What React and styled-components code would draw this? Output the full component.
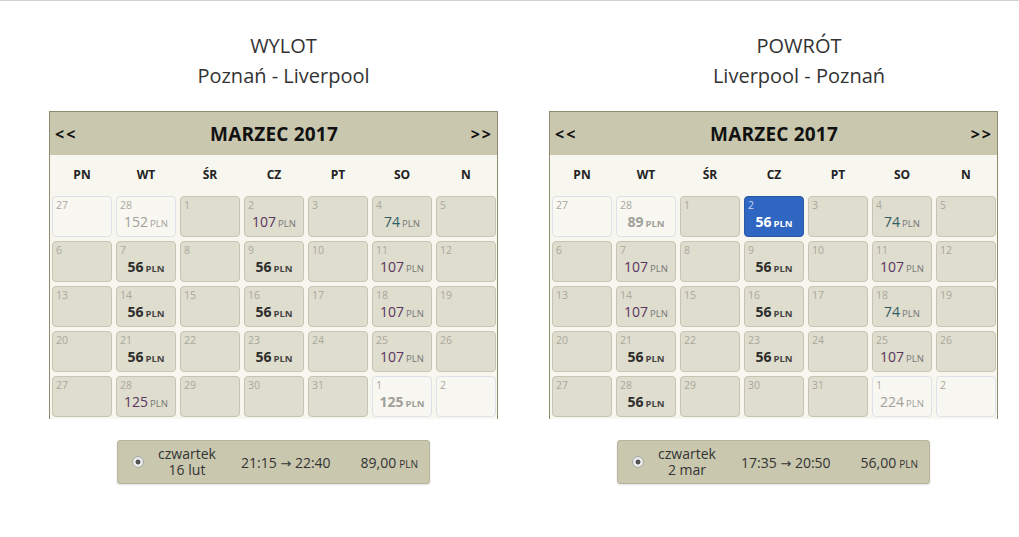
import styled, { createGlobalStyle } from "styled-components";

const GlobalStyle = createGlobalStyle`
  body {
    margin: 0;
    font-family: "Open Sans", "Noto Sans", sans-serif;
    background: #fff;
    color: #333;
  }
  * { box-sizing: border-box; }
`;

const Page = styled.div`
  border-top: 1px solid #d3d3d3;
  height: 536px;
  display: flex;
  gap: 51px;
  padding-left: 49px;
`;

const Column = styled.section`
  width: 449px;
  display: flex;
  flex-direction: column;
`;

const Title = styled.div`
  width: ${(p) => p.$width}px;
  margin-top: 30px;
  text-align: center;
  font-size: 20px;
  line-height: 30px;
  color: #333;
`;

const Calendar = styled.div`
  margin-top: 20px;
  width: 449px;
  border: 1px solid #8d8c6e;
  border-bottom: none;
  background: #f7f6ef;
  padding-bottom: 2px;
`;

const Header = styled.div`
  height: 43px;
  background: #c9c8af;
  display: flex;
  align-items: center;
  justify-content: space-between;
  padding: 0 4px 0 5px;
  font-weight: 700;
  color: #111;
`;

const Arrow = styled.span`
  font-size: 16px;
  letter-spacing: 2px;
`;

const Month = styled.span`
  font-size: 19px;
  letter-spacing: 0.2px;
`;

const Grid = styled.div`
  display: grid;
  grid-template-columns: repeat(7, 60px);
  column-gap: 4px;
  row-gap: 4px;
  padding: 0 2px;
`;

const DayName = styled.div`
  height: 37px;
  display: flex;
  align-items: center;
  justify-content: center;
  padding-top: 2px;
  font-size: 12px;
  font-weight: 700;
  color: #222;
`;

const Cell = styled.div`
  position: relative;
  height: 41px;
  border-radius: 4px;
  border: 1px solid
    ${(p) => (p.$selected ? "#2a58a6" : p.$out ? "#dde2e8" : "#c6c4b3")};
  background: ${(p) => (p.$selected ? "#2f66c2" : p.$out ? "#f8f7f1" : "#dfddcd")};
`;

const DayNum = styled.span`
  position: absolute;
  left: 3px;
  top: 1px;
  font-size: 10.5px;
  color: ${(p) => (p.$selected ? "#c9d6ee" : "#a9a8a0")};
`;

const toneColor = {
  low: "#2d2d2d",
  mid: "#2f5b63",
  high: "#5b3461",
  out: "#a09f99",
  sel: "#ffffff",
};

const Price = styled.div`
  position: absolute;
  left: 0;
  right: 0;
  top: 15px;
  text-align: center;
  font-size: 14px;
  line-height: 20px;
  font-weight: ${(p) => (p.$bold ? 700 : 400)};
  color: ${(p) => toneColor[p.$tone]};
  small {
    font-size: 9.5px;
    font-weight: ${(p) => (p.$bold ? 700 : 400)};
    color: ${(p) => (p.$tone === "sel" ? "#fff" : p.$tone === "out" ? "#a09f99" : p.$bold ? "#444" : "#777")};
    margin-left: 2px;
  }
`;

const Option = styled.div`
  margin: 21px 0 0 68px;
  width: 313px;
  height: 44px;
  border: 1px solid #b6b59c;
  border-radius: 3px;
  background: #c9c8af;
  box-shadow: 0 1px 2px rgba(0, 0, 0, 0.12);
  display: flex;
  align-items: center;
  padding-left: 14px;
  font-size: 14px;
  color: #333;
`;

const Radio = styled.span`
  width: 12px;
  height: 12px;
  border-radius: 50%;
  background: radial-gradient(circle, #555 0 2.2px, #f4f4f4 2.8px, #d2d2d2 100%);
  border: 1px solid #a9a9a9;
  flex-shrink: 0;
`;

const DateBlock = styled.div`
  width: 76px;
  margin-left: 5px;
  text-align: center;
  line-height: 16px;
  div {
    height: 16px;
  }
`;

const Times = styled.div`
  margin-left: 16px;
  span {
    font-family: "DejaVu Sans", sans-serif;
    font-size: 13px;
  }
`;

const Fare = styled.div`
  margin-left: auto;
  margin-right: 11px;
  small {
    font-size: 10px;
    margin-left: 3px;
  }
`;

const DAYS = ["PN", "WT", "ŚR", "CZ", "PT", "SO", "N"];

const c = (day, price, tone, extra = {}) => ({ day, price, tone, ...extra });

const outbound = [
  c(27, null, null, { out: true }),
  c(28, 152, "out", { out: true }),
  c(1),
  c(2, 107, "high"),
  c(3),
  c(4, 74, "mid"),
  c(5),
  c(6),
  c(7, 56, "low"),
  c(8),
  c(9, 56, "low"),
  c(10),
  c(11, 107, "high"),
  c(12),
  c(13),
  c(14, 56, "low"),
  c(15),
  c(16, 56, "low"),
  c(17),
  c(18, 107, "high"),
  c(19),
  c(20),
  c(21, 56, "low"),
  c(22),
  c(23, 56, "low"),
  c(24),
  c(25, 107, "high"),
  c(26),
  c(27),
  c(28, 125, "high"),
  c(29),
  c(30),
  c(31),
  c(1, 125, "out", { out: true, bold: true }),
  c(2, null, null, { out: true }),
];

const inbound = [
  c(27, null, null, { out: true }),
  c(28, 89, "out", { out: true, bold: true }),
  c(1),
  c(2, 56, "sel", { selected: true, bold: true }),
  c(3),
  c(4, 74, "mid"),
  c(5),
  c(6),
  c(7, 107, "high"),
  c(8),
  c(9, 56, "low"),
  c(10),
  c(11, 107, "high"),
  c(12),
  c(13),
  c(14, 107, "high"),
  c(15),
  c(16, 56, "low"),
  c(17),
  c(18, 74, "mid"),
  c(19),
  c(20),
  c(21, 56, "low"),
  c(22),
  c(23, 56, "low"),
  c(24),
  c(25, 107, "high"),
  c(26),
  c(27),
  c(28, 56, "low"),
  c(29),
  c(30),
  c(31),
  c(1, 224, "out", { out: true }),
  c(2, null, null, { out: true }),
];

const legs = [
  {
    label: "WYLOT",
    route: "Poznań - Liverpool",
    titleWidth: 469,
    cells: outbound,
    weekday: "czwartek",
    date: "16 lut",
    from: "21:15",
    to: "22:40",
    fare: "89,00",
  },
  {
    label: "POWRÓT",
    route: "Liverpool - Poznań",
    titleWidth: 500,
    cells: inbound,
    weekday: "czwartek",
    date: "2 mar",
    from: "17:35",
    to: "20:50",
    fare: "56,00",
  },
];

function MonthCalendar({ cells }) {
  return (
    <Calendar>
      <Header>
        <Arrow>&lt;&lt;</Arrow>
        <Month>MARZEC 2017</Month>
        <Arrow>&gt;&gt;</Arrow>
      </Header>
      <Grid>
        {DAYS.map((d) => (
          <DayName key={d}>{d}</DayName>
        ))}
        {cells.map((cell, i) => {
          const bold = cell.bold ?? cell.tone === "low";
          return (
            <Cell key={i} $out={cell.out} $selected={cell.selected}>
              <DayNum $selected={cell.selected}>{cell.day}</DayNum>
              {cell.price && (
                <Price $tone={cell.tone} $bold={bold}>
                  {cell.price}
                  <small>PLN</small>
                </Price>
              )}
            </Cell>
          );
        })}
      </Grid>
    </Calendar>
  );
}

export default function App() {
  return (
    <>
      <GlobalStyle />
      <Page>
        {legs.map((leg) => (
          <Column key={leg.label}>
            <Title $width={leg.titleWidth}>
              <div>{leg.label}</div>
              <div>{leg.route}</div>
            </Title>
            <MonthCalendar cells={leg.cells} />
            <Option>
              <Radio />
              <DateBlock>
                <div>{leg.weekday}</div>
                <div>{leg.date}</div>
              </DateBlock>
              <Times>
                {leg.from} <span>→</span> {leg.to}
              </Times>
              <Fare>
                {leg.fare}
                <small>PLN</small>
              </Fare>
            </Option>
          </Column>
        ))}
      </Page>
    </>
  );
}
